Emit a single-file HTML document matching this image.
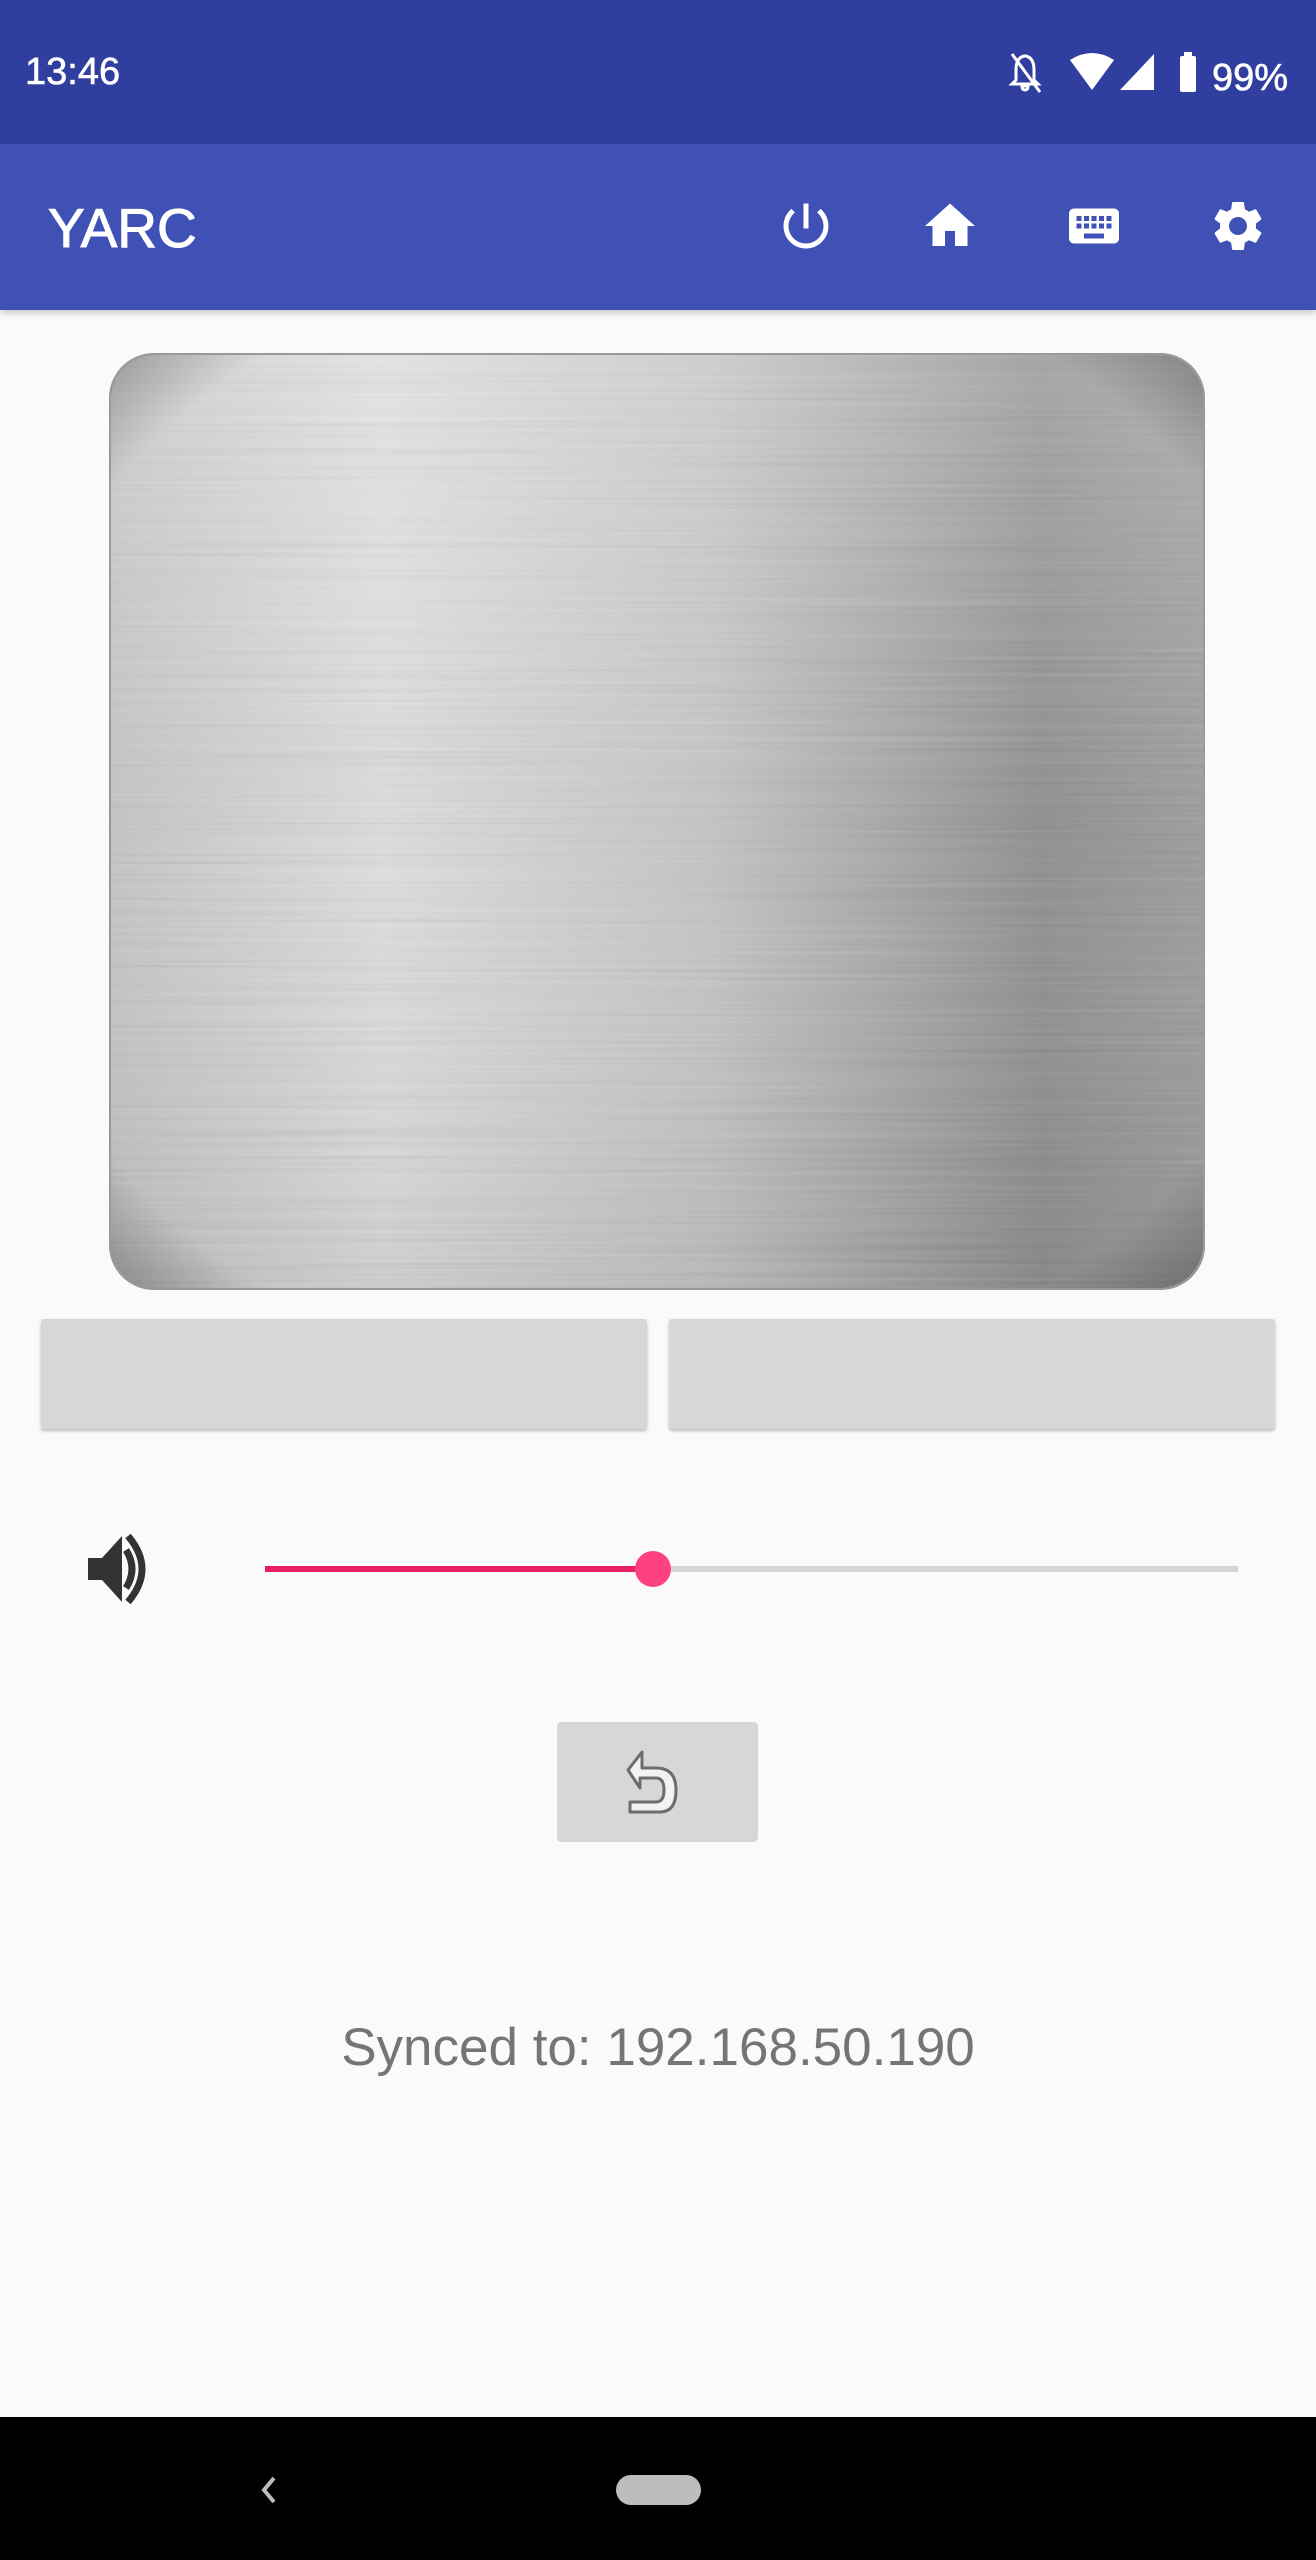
<!DOCTYPE html>
<html><head><meta charset="utf-8">
<style>
html,body{margin:0;padding:0}
body{width:1316px;height:2560px;position:relative;background:#fafafa;font-family:"Liberation Sans",sans-serif;overflow:hidden}
.abs{position:absolute}
</style></head><body>
<div class="abs" style="left:0;top:0;width:1316px;height:144px;background:#303f9f"></div>
<div class="abs" style="left:25px;top:52px;color:#fff;font-size:38px;line-height:40px;font-weight:500;-webkit-text-stroke:0.6px #fff">13:46</div>
<svg class="abs" style="left:1000px;top:50px" width="300" height="45" viewBox="0 0 300 45">
 <g fill="#fff">
  <path d="M24 6 q-8 2 -8 14 v10 l-4 4 h26 l-4 -4 v-10 q0 -12 -8 -14z M22 36 h6 q0 4 -3 4 q-3 0 -3 -4z" fill="none" stroke="#fff" stroke-width="3"/>
  <path d="M12 4 L40 42" stroke="#fff" stroke-width="3"/>
  <path d="M92 40 L70 10 Q92 -4 114 10 Z"/>
  <path d="M120 40 L154 4 V40 Z" />
  <rect x="180" y="6" width="16" height="36" rx="2"/>
  <rect x="184" y="2" width="8" height="6"/>
 </g>
 <text x="212" y="40" fill="#fff" font-size="38" font-family="Liberation Sans" stroke="#fff" stroke-width="0.6">99%</text>
</svg>
<div class="abs" style="left:0;top:144px;width:1316px;height:166px;background:#3f51b5;box-shadow:0 3px 6px rgba(0,0,0,.2)"></div>
<div class="abs" style="left:48px;top:200px;color:#fff;font-size:55px;line-height:56px;-webkit-text-stroke:1px #fff">YARC</div>
<svg class="abs" style="left:776px;top:196px" width="60" height="60" viewBox="0 0 24 24"><path fill="#fff" d="M13 3h-2v10h2V3zm4.83 2.170l-1.42 1.42C17.99 7.86 19 9.81 19 12c0 3.87-3.13 7-7 7s-7-3.130-7-7c0-2.19 1.01-4.14 2.58-5.42L6.17 5.17C4.23 6.82 3 9.26 3 12c0 4.97 4.03 9 9 9s9-4.03 9-9c0-2.74-1.23-5.18-3.170-6.83z"/></svg>
<svg class="abs" style="left:920px;top:196px" width="60" height="60" viewBox="0 0 24 24"><path fill="#fff" d="M10 20v-6h4v6h5v-8h3L12 3 2 12h3v8z"/></svg>
<svg class="abs" style="left:1064px;top:196px" width="60" height="60" viewBox="0 0 24 24"><path fill="#fff" d="M20 5H4c-1.1 0-2 .9-2 2v10c0 1.1.9 2 2 2h16c1.1 0 2-.9 2-2V7c0-1.1-.9-2-2-2zm-9 3h2v2h-2V8zm0 3h2v2h-2v-2zM8 8h2v2H8V8zm0 3h2v2H8v-2zm-1 2H5v-2h2v2zm0-3H5V8h2v2zm9 7H8v-2h8v2zm0-4h-2v-2h2v2zm0-3h-2V8h2v2zm3 3h-2v-2h2v2zm0-3h-2V8h2v2z"/></svg>
<svg class="abs" style="left:1208px;top:196px" width="60" height="60" viewBox="0 0 24 24"><path fill="#fff" d="M19.14 12.94c.04-.3.06-.61.06-.94 0-.32-.02-.64-.07-.94l2.03-1.58a.49.49 0 00.12-.61l-1.92-3.32a.488.488 0 00-.59-.22l-2.39.96c-.5-.38-1.03-.7-1.62-.94l-.36-2.54a.484.484 0 00-.48-.41h-3.840c-.24 0-.43.17-.47.41l-.36 2.54c-.59.24-1.13.57-1.62.94l-2.39-.96c-.22-.08-.47 0-.59.22L2.74 8.87c-.12.21-.08.47.12.61l2.03 1.58c-.05.3-.09.63-.09.94s.02.64.07.94l-2.03 1.58a.49.49 0 00-.12.61l1.92 3.32c.12.22.37.29.59.22l2.39-.96c.5.38 1.03.7 1.62.94l.36 2.54c.05.24.24.41.48.41h3.84c.24 0 .44-.17.47-.41l.36-2.54c.59-.24 1.13-.56 1.62-.94l2.39.96c.22.08.47 0 .59-.22l1.92-3.32c.12-.22.07-.47-.12-.61l-2.01-1.58zM12 15.6c-1.98 0-3.6-1.62-3.6-3.6s1.62-3.6 3.6-3.6 3.6 1.62 3.6 3.6-1.62 3.6-3.6 3.6z"/></svg>
<svg class="abs" style="left:109px;top:353px" width="1096" height="937" viewBox="0 0 1096 937">
 <defs>
  <clipPath id="c"><rect width="1096" height="937" rx="45"/></clipPath>
  <linearGradient id="g" x1="0" x2="1" y1="0" y2="0">
   <stop offset="0" stop-color="#c4c4c4"/><stop offset=".25" stop-color="#dedede"/><stop offset=".55" stop-color="#c4c4c4"/><stop offset=".85" stop-color="#8a8c8e"/><stop offset="1" stop-color="#9a9a9a"/>
  </linearGradient>
  <linearGradient id="v" x1="0" x2="0" y1="0" y2="1">
   <stop offset="0" stop-color="#fff" stop-opacity=".2"/><stop offset=".5" stop-color="#fff" stop-opacity="0"/><stop offset="1" stop-color="#000" stop-opacity=".06"/>
  </linearGradient>
  <filter id="n" x="0" y="0" width="100%" height="100%">
   <feTurbulence type="fractalNoise" baseFrequency="0.002 0.25" numOctaves="3" seed="4"/>
   <feColorMatrix type="saturate" values="0"/>
  </filter>
  <radialGradient id="e" cx=".5" cy=".5" r=".72">
   <stop offset=".85" stop-color="#000" stop-opacity="0"/><stop offset="1" stop-color="#000" stop-opacity=".3"/>
  </radialGradient>
 </defs>
 <g clip-path="url(#c)">
  <rect width="1096" height="937" fill="url(#g)"/>
  <rect width="1096" height="937" filter="url(#n)" opacity=".25"/>
  <rect width="1096" height="937" fill="url(#v)"/>
  <rect width="1096" height="937" fill="url(#e)"/>
 </g>
 <rect x="1" y="1" width="1094" height="935" rx="45" fill="none" stroke="#999" stroke-width="2"/>
</svg>
<div class="abs" style="left:41px;top:1319px;width:606px;height:110px;background:#d6d7d7;border-radius:3px;box-shadow:0 2px 3px rgba(0,0,0,.25)"></div>
<div class="abs" style="left:669px;top:1319px;width:606px;height:110px;background:#d6d7d7;border-radius:3px;box-shadow:0 2px 3px rgba(0,0,0,.25)"></div>
<svg class="abs" style="left:86px;top:1534px" width="74" height="70" viewBox="0 0 74 70">
 <path d="M2 24 H16 L36 2 V68 L16 46 H2Z" fill="#333"/>
 <path d="M40 16 Q52 35 40 54" fill="none" stroke="#333" stroke-width="7"/>
 <path d="M42 2 Q70 35 42 68" fill="none" stroke="#333" stroke-width="7"/>
</svg>
<div class="abs" style="left:265px;top:1566px;width:388px;height:6px;background:#e91e63"></div>
<div class="abs" style="left:653px;top:1566px;width:585px;height:6px;background:#d6d6d6"></div>
<div class="abs" style="left:635px;top:1551px;width:36px;height:36px;border-radius:50%;background:#ff4081"></div>
<div class="abs" style="left:557px;top:1722px;width:201px;height:120px;background:#d6d7d7;border-radius:4px"></div>
<svg class="abs" style="left:620px;top:1748px" width="80" height="70" viewBox="0 0 80 70">
 <path d="M22 4 L8 22 L20 40 V30 H36 Q44 30 44 42 Q44 54 36 54 H10 V64 H40 Q56 64 56 42 Q56 20 36 20 H22Z" fill="#f2f2f2" stroke="#6d6d6d" stroke-width="3" stroke-linejoin="round"/>
</svg>
<div class="abs" style="left:0;top:2018px;width:1316px;text-align:center;color:#757575;font-size:53px;line-height:60px">Synced to: 192.168.50.190</div>
<div class="abs" style="left:0;top:2417px;width:1316px;height:143px;background:#000"></div>
<svg class="abs" style="left:254px;top:2470px" width="30" height="40" viewBox="0 0 30 40"><path d="M20 8 L10 20 L20 32" fill="none" stroke="#bbb" stroke-width="4"/></svg>
<div class="abs" style="left:616px;top:2475px;width:85px;height:30px;border-radius:15px;background:#bdbdbd"></div>
</body></html>
